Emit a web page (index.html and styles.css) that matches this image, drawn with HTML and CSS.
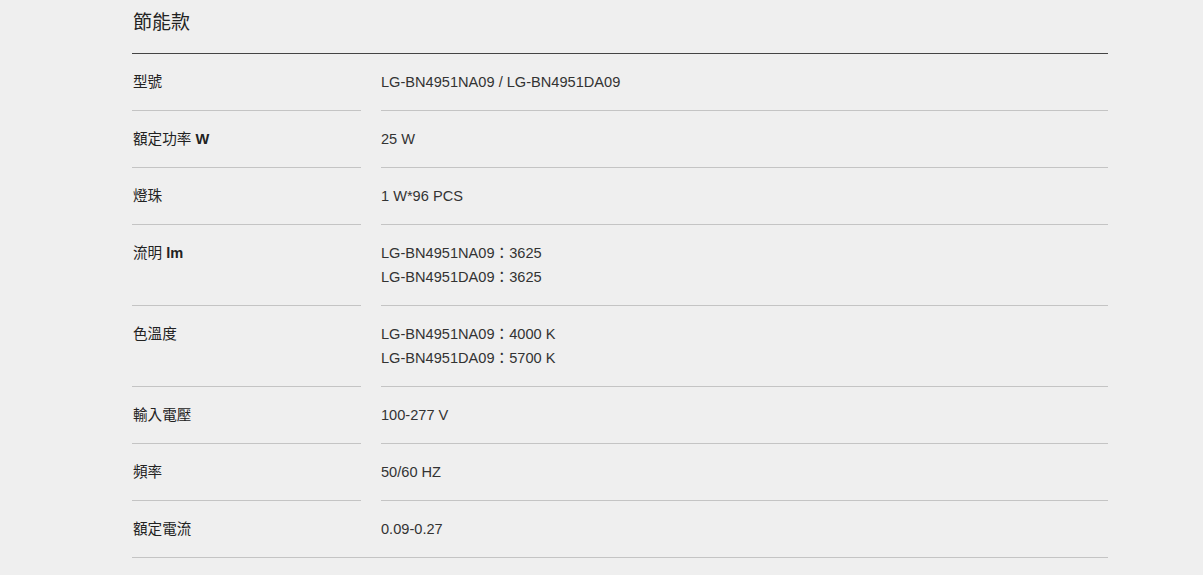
FILE: index.html
```html
<!DOCTYPE html>
<html lang="zh-Hant">
<head>
<meta charset="utf-8">
<link rel="stylesheet" href="styles.css">
</head>
<body>
<section class="spec">
  <h2 class="spec-title">節能款</h2>
  <div class="spec-table">
    <div class="row"><div class="label">型號</div><div class="value">LG-BN4951NA09 / LG-BN4951DA09</div></div>
    <div class="row"><div class="label">額定功率 <b>W</b></div><div class="value">25 W</div></div>
    <div class="row"><div class="label">燈珠</div><div class="value">1 W*96 PCS</div></div>
    <div class="row"><div class="label">流明 <b>lm</b></div><div class="value">LG-BN4951NA09：3625<br>LG-BN4951DA09：3625</div></div>
    <div class="row"><div class="label">色溫度</div><div class="value">LG-BN4951NA09：4000 K<br>LG-BN4951DA09：5700 K</div></div>
    <div class="row"><div class="label">輸入電壓</div><div class="value">100-277 V</div></div>
    <div class="row"><div class="label">頻率</div><div class="value">50/60 HZ</div></div>
    <div class="row"><div class="label">額定電流</div><div class="value">0.09-0.27</div></div>
  </div>
</section>
</body>
</html>
```
FILE: styles.css
```css
html, body {
  background: #efefef;
}
body {
  margin: 8px;
  font-family: "Liberation Sans", Arial, "Noto Sans CJK TC", sans-serif;
  color: #333;
}
.spec {
  width: 976px;
  margin-left: 124px;
}
.spec-title {
  margin: 0;
  padding-left: 1px;
  font-size: 19px;
  font-weight: normal;
  line-height: 28px;
  color: #222;
  padding-top: 1px;
  padding-bottom: 16px;
  border-bottom: 1px solid #444;
}
.spec-table {
  border-bottom: 1px solid #c4c4c4;
}
.row {
  display: grid;
  grid-template-columns: 229px 1fr;
  column-gap: 20px;
  font-size: 14.6px;
  line-height: 24px;
}
.label, .value {
  padding: 16px 0;
  border-bottom: 1px solid #c4c4c4;
}
.row:last-child .label,
.row:last-child .value {
  border-bottom: none;
}
.label {
  color: #222;
  padding-left: 1px;
}
.label b {
  font-weight: bold;
}
```
